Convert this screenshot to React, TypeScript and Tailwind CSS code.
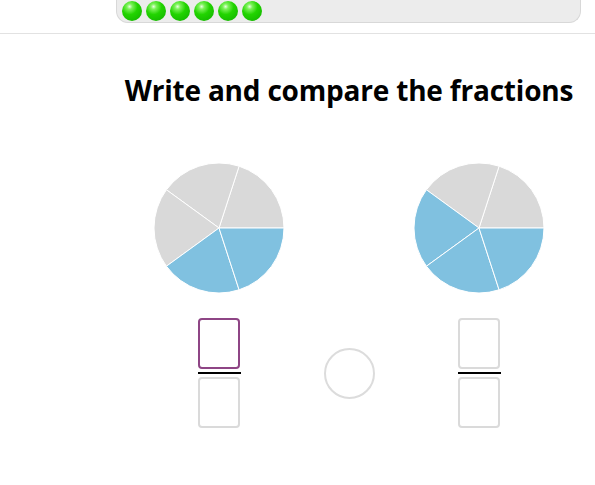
const R = 65;

function pt(deg: number) {
  const a = (deg * Math.PI) / 180;
  return `${(R * Math.cos(a)).toFixed(2)} ${(-R * Math.sin(a)).toFixed(2)}`;
}

function Pie({ filled }: { filled: number[] }) {
  return (
    <svg width="130" height="130" viewBox="-65 -65 130 130">
      {[0, 1, 2, 3, 4].map((k) => (
        <path
          key={k}
          d={`M0 0 L${pt(k * 72)} A${R} ${R} 0 0 0 ${pt((k + 1) * 72)} Z`}
          fill={filled.includes(k) ? "#80c1e0" : "#d9d9d9"}
          stroke="#ffffff"
          strokeWidth="1"
        />
      ))}
    </svg>
  );
}

function Fraction({ active }: { active?: boolean }) {
  return (
    <div className="flex flex-col items-center">
      <div
        className={`w-[42px] h-[51px] rounded-[4px] border-2 ${
          active ? "border-[#8e4585]" : "border-[#dadada]"
        }`}
      />
      <div className="w-[43px] h-[2px] bg-black my-[3px]" />
      <div className="w-[42px] h-[51px] rounded-[4px] border-2 border-[#dadada]" />
    </div>
  );
}

export default function App() {
  return (
    <div className="w-[595px] h-[485px] bg-white overflow-hidden" style={{ fontFamily: "Lato, 'Noto Sans', sans-serif" }}>
      {/* progress header */}
      <div className="h-[34px] border-b border-[#e2e2e2]">
        <div className="ml-[116px] w-[465px] h-[23px] bg-[#ececec] border border-t-0 border-[#d8d8d8] rounded-b-[12px] flex items-center gap-[4px] pl-[5px]">
          {[0, 1, 2, 3, 4, 5].map((i) => (
            <div
              key={i}
              className="w-[20px] h-[20px] rounded-full bg-[radial-gradient(circle_at_38%_28%,#e8ffe0_0%,#7cf25a_14%,#22d400_42%,#0fae00_100%)]"
            />
          ))}
        </div>
      </div>

      <div className="ml-[103px] w-[492px]">
        <h1 className="text-center text-[28px] font-bold text-black leading-none mt-[42px] font-['Open_Sans',sans-serif] tracking-[-0.2px]">
          Write and compare the fractions
        </h1>
      </div>

      <div className="ml-[154px] grid grid-cols-[130px_130px_130px] mt-[59px]">
        <div className="flex justify-center">
          <Pie filled={[3, 4]} />
        </div>
        <div />
        <div className="flex justify-center">
          <Pie filled={[2, 3, 4]} />
        </div>

        <div className="flex justify-center mt-[25px]">
          <Fraction active />
        </div>
        <div className="flex justify-center items-center mt-[25px]">
          <div className="w-[51px] h-[51px] rounded-full border-2 border-[#dcdcdc]" />
        </div>
        <div className="flex justify-center mt-[25px]">
          <Fraction />
        </div>
      </div>
    </div>
  );
}
